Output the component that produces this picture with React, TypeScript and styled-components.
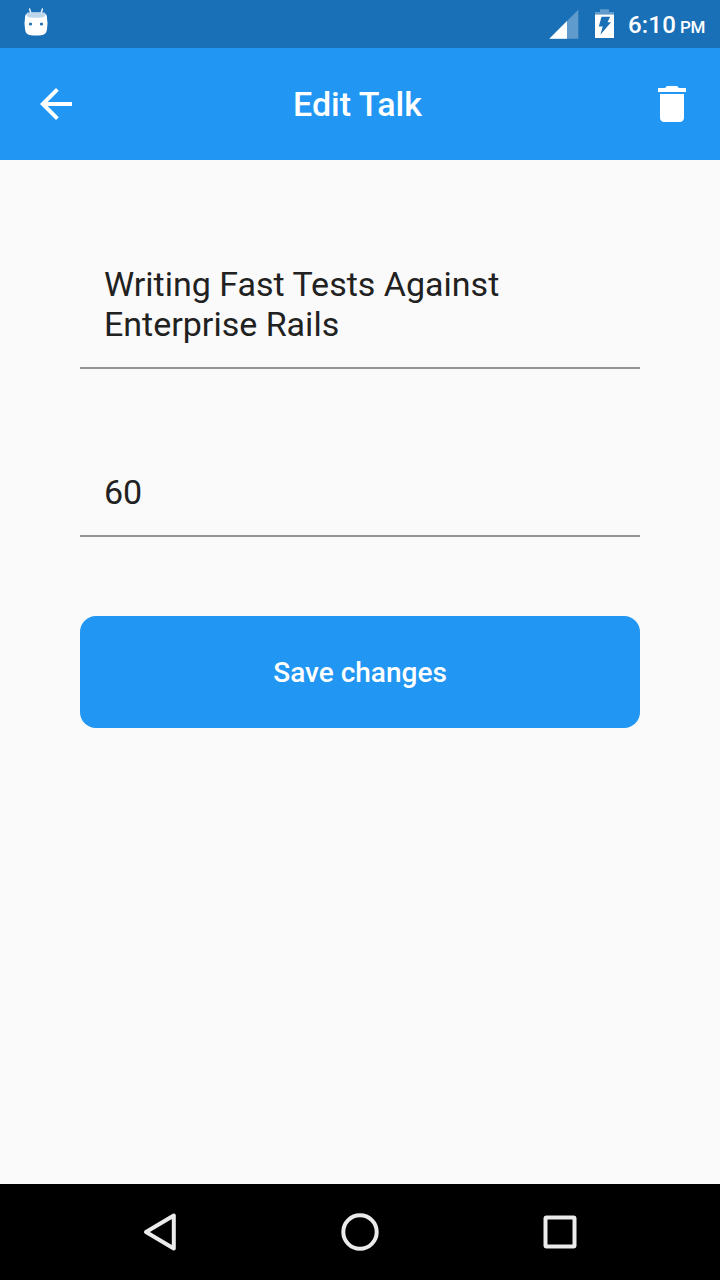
import React from "react";
import styled, { createGlobalStyle } from "styled-components";

const GlobalStyle = createGlobalStyle`
  * { box-sizing: border-box; }
  body { margin: 0; background: #fafafa; font-family: Roboto, sans-serif; }
`;

const Screen = styled.div`
  display: flex;
  flex-direction: column;
  width: 720px;
  height: 1280px;
  background: #fafafa;
  overflow: hidden;
`;

const StatusBar = styled.div`
  display: flex;
  justify-content: space-between;
  height: 48px;
  padding: 0 15px 0 20px;
  background: #1a70b7;
  color: #fff;
`;

const StatusGroup = styled.div`
  display: flex;
  align-items: flex-start;
`;

const Icon = styled.svg`
  display: block;
  flex: none;
`;

const Clock = styled.div`
  width: 77px;
  margin-left: 8px;
  font-size: 24px;
  font-weight: 500;
  line-height: 28px;
  padding-top: 11px;
  letter-spacing: 0.2px;
  white-space: pre;
`;

const Meridiem = styled.span`
  margin-left: -2.2px;
  font-size: 17px;
  letter-spacing: -0.3px;
`;

const AppBar = styled.header`
  display: flex;
  align-items: center;
  justify-content: space-between;
  height: 112px;
  padding: 0 24px 0 32px;
  background: #2196f3;
  color: #fff;
`;

const IconButton = styled.button`
  display: block;
  padding: 0;
  border: 0;
  background: none;
  color: inherit;
`;

const Title = styled.h1`
  margin: 0 13px 0 0;
  font-size: 34px;
  font-weight: 500;
  line-height: 40px;
`;

const Form = styled.main`
  display: flex;
  flex: 1;
  flex-direction: column;
  padding: 80px 80px 0;
`;

const Field = styled.div`
  padding: 24px 24px 23px;
  border-bottom: 2px solid #949494;
  color: #212121;
  font-size: 34px;
  line-height: 40px;

  & + & { margin-top: 79px; }
`;

const SaveButton = styled.button`
  height: 112px;
  margin-top: 79px;
  padding: 2px 0 0;
  border: 0;
  border-radius: 16px;
  background: #2196f3;
  color: #fff;
  font: 500 28px/32px Roboto, sans-serif;
`;

const NavBar = styled.nav`
  display: flex;
  align-items: center;
  justify-content: center;
  gap: 152px;
  height: 96px;
  background: #000;
  color: #ebebeb;
`;

function DebugIcon() {
  return (
    <Icon width="32" height="48" viewBox="20 0 32 48">
      <path d="M29.6 9l1.500 5M42.4 9l-1.500 5" stroke="#e3eef6" strokeWidth="1.5" strokeLinecap="round" />
      <path d="M25 18q0-5.500 5-5.500h12q5 0 5 5.500l.5 5-.5 6q-.5 6-6 6.200-5 .5-10 0-5.500-.2-6-6.200l-.5-6z" fill="#fff" />
      <path d="M26 14.500q2-2 5-2h10q3 0 5 2-1 2.500-4.500 3-5.500.6-11 0-3.500-.5-4.500-3z" fill="#bdd6ea" />
      <circle cx="30.500" cy="24" r="1.600" fill="#1a70b7" />
      <circle cx="41.500" cy="24" r="1.600" fill="#1a70b7" />
    </Icon>
  );
}

function SignalIcon() {
  return (
    <Icon width="32" height="48" viewBox="548 0 32 48">
      <path d="M578.300 9.700v29H549.300z" fill="#5f9bcd" />
      <path d="M567 21v17.700h-17.700z" fill="#fff" />
    </Icon>
  );
}

function BatteryIcon() {
  return (
    <Icon width="40" height="48" viewBox="580 0 40 48">
      <path d="M600 9.300h9v2.700h5v2.500h-19V12h5z" fill="#5f9bcd" />
      <path d="M595 14.500h19V38h-19z" fill="#fff" />
      <path d="M601.500 16.700h8.700l-2.700 5.500h3.500l-10.600 12.600 2.300-8.300h-3.900z" fill="#1a70b7" />
    </Icon>
  );
}

export default function App() {
  return (
    <>
      <GlobalStyle />
      <Screen>
        <StatusBar>
          <DebugIcon />
          <StatusGroup>
            <SignalIcon />
            <BatteryIcon />
            <Clock>6:10 <Meridiem>PM</Meridiem></Clock>
          </StatusGroup>
        </StatusBar>
        <AppBar>
          <IconButton aria-label="Back">
            <Icon width="48" height="48" viewBox="0 0 24 24" fill="currentColor">
              <path d="M20 11H7.830l5.590-5.590L12 4l-8 8 8 8 1.410-1.410L7.830 13H20v-2z" />
            </Icon>
          </IconButton>
          <Title>Edit Talk</Title>
          <IconButton aria-label="Delete">
            <Icon width="48" height="48" viewBox="0 0 24 24" fill="currentColor">
              <path d="M6 19c0 1.100.9 2 2 2h8c1.100 0 2-.9 2-2V7H6v12zM19 4h-3.500l-1-1h-5l-1 1H5v2h14V4z" />
            </Icon>
          </IconButton>
        </AppBar>
        <Form>
          <Field>Writing Fast Tests Against Enterprise Rails</Field>
          <Field>60</Field>
          <SaveButton>Save changes</SaveButton>
        </Form>
        <NavBar>
          <Icon width="48" height="48" viewBox="0 0 48 48" fill="none" stroke="currentColor" strokeWidth="4" strokeLinejoin="round">
            <path d="M37.800 7.500v33L10 24z" />
          </Icon>
          <Icon width="48" height="48" viewBox="0 0 48 48" fill="none" stroke="currentColor" strokeWidth="4">
            <circle cx="24" cy="24" r="16.700" />
          </Icon>
          <Icon width="48" height="48" viewBox="0 0 48 48" fill="none" stroke="currentColor" strokeWidth="4">
            <rect x="9.500" y="9.500" width="29" height="29" rx="1" />
          </Icon>
        </NavBar>
      </Screen>
    </>
  );
}
